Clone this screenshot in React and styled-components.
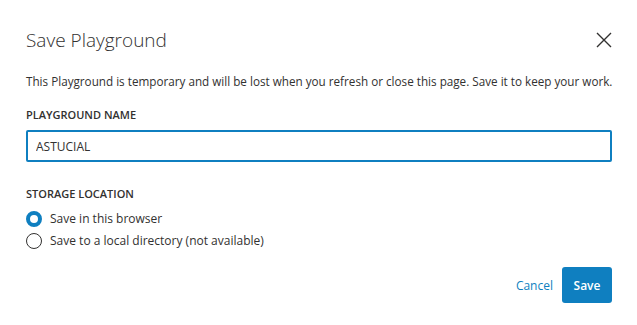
import React, { useState } from "react";
import styled, { createGlobalStyle } from "styled-components";

const GlobalStyle = createGlobalStyle`
  html, body {
    margin: 0;
    background: #ffffff;
  }
  body {
    font-family: "Open Sans", "Noto Sans", sans-serif;
    color: #323130;
  }
`;

const Dialog = styled.div`
  width: 637px;
  height: 325px;
  box-sizing: border-box;
  padding: 22px 25px 0 26px;
  display: flex;
  flex-direction: column;
`;

const Header = styled.div`
  display: flex;
  align-items: center;
  justify-content: space-between;
  height: 36px;
`;

const Title = styled.h2`
  margin: 0;
  font-size: 19px;
  font-weight: 300;
  color: #323130;
`;

const CloseButton = styled.button`
  border: none;
  background: none;
  padding: 0;
  width: 24px;
  height: 24px;
  display: flex;
  align-items: center;
  justify-content: center;
  cursor: pointer;
  margin-right: -4px;
`;

const Description = styled.p`
  margin: 14px 0 0;
  font-size: 11.7px;
  line-height: 18px;
  white-space: nowrap;
  color: #323130;
`;

const Label = styled.div`
  margin-top: ${(p) => p.$top}px;
  font-size: 11px;
  font-weight: 600;
  line-height: 16px;
  color: #323130;
`;

const Input = styled.input`
  margin-top: 7px;
  height: 32px;
  box-sizing: border-box;
  border: 2px solid #0f7fc0;
  border-radius: 2px;
  padding: 0 8px;
  font-family: inherit;
  font-size: 12px;
  color: #323130;
  caret-color: #323130;
  outline: none;
`;

const RadioList = styled.div`
  display: flex;
  flex-direction: column;
  gap: 6px;
  margin-top: 9px;
`;

const RadioRow = styled.label`
  display: flex;
  align-items: center;
  gap: 8px;
  font-size: 12px;
  line-height: 16px;
  color: #323130;
  cursor: pointer;
`;

const RadioDot = styled.span`
  width: 16px;
  height: 16px;
  box-sizing: border-box;
  border-radius: 50%;
  border: ${(p) => (p.$checked ? "4.5px solid #0f7fc0" : "1px solid #323130")};
  background: #fff;
  flex-shrink: 0;
`;

const Footer = styled.div`
  display: flex;
  justify-content: flex-end;
  align-items: center;
  gap: 9px;
  margin-top: 18px;
`;

const LinkButton = styled.button`
  border: none;
  background: none;
  padding: 0;
  font-family: inherit;
  font-size: 12px;
  color: #0f7fc0;
  cursor: pointer;
`;

const PrimaryButton = styled.button`
  width: 50px;
  height: 36px;
  border: none;
  border-radius: 3px;
  background: #0f7fc0;
  color: #fff;
  font-family: inherit;
  font-size: 12px;
  font-weight: 600;
  cursor: pointer;
`;

const options = [
  { id: "browser", label: "Save in this browser" },
  { id: "local", label: "Save to a local directory (not available)" },
];

export default function App() {
  const [name, setName] = useState("ASTUCIAL");
  const [location, setLocation] = useState("browser");

  return (
    <>
      <GlobalStyle />
      <Dialog>
        <Header>
          <Title>Save Playground</Title>
          <CloseButton aria-label="Close">
            <svg width="16" height="16" viewBox="0 0 16 16">
              <path d="M1 1L15 15M15 1L1 15" stroke="#323130" strokeWidth="1.4" />
            </svg>
          </CloseButton>
        </Header>
        <Description>
          This Playground is temporary and will be lost when you refresh or close this page. Save
          it to keep your work.
        </Description>
        <Label $top={17}>PLAYGROUND NAME</Label>
        <Input autoFocus value={name} onChange={(e) => setName(e.target.value)} />
        <Label $top={24}>STORAGE LOCATION</Label>
        <RadioList>
          {options.map((o) => (
            <RadioRow key={o.id} onClick={() => setLocation(o.id)}>
              <RadioDot $checked={location === o.id} />
              {o.label}
            </RadioRow>
          ))}
        </RadioList>
        <Footer>
          <LinkButton>Cancel</LinkButton>
          <PrimaryButton>Save</PrimaryButton>
        </Footer>
      </Dialog>
    </>
  );
}
